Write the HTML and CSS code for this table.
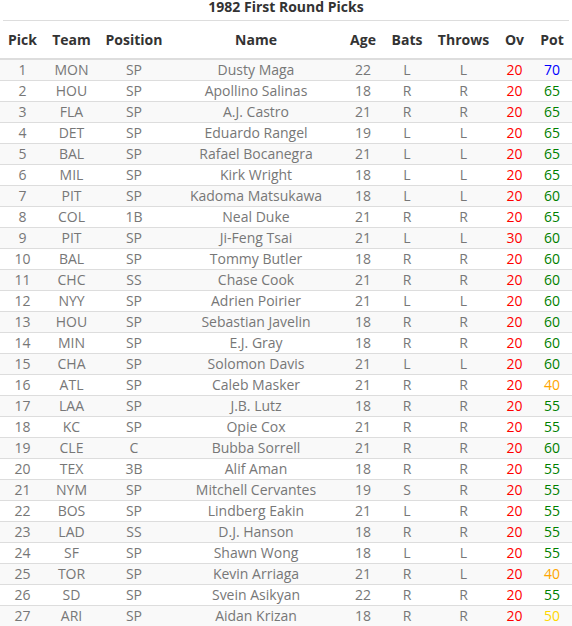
FILE: index.html
```html
<!DOCTYPE html>
<html>
<head>
<meta charset="utf-8">
<link rel="stylesheet" href="styles.css">
</head>
<body>
<div class="title">1982 First Round Picks</div>
<table class="picks">
<colgroup>
<col class="c-pick"><col class="c-team"><col class="c-pos"><col class="c-name"><col class="c-age"><col class="c-bats"><col class="c-throws"><col class="c-ov"><col class="c-pot">
</colgroup>
<thead>
<tr><th>Pick</th><th>Team</th><th>Position</th><th>Name</th><th>Age</th><th>Bats</th><th>Throws</th><th>Ov</th><th>Pot</th></tr>
</thead>
<tbody>
<tr><td>1</td><td>MON</td><td>SP</td><td>Dusty Maga</td><td>22</td><td>L</td><td>L</td><td class="red">20</td><td class="blue">70</td></tr>
<tr><td>2</td><td>HOU</td><td>SP</td><td>Apollino Salinas</td><td>18</td><td>R</td><td>R</td><td class="red">20</td><td class="green">65</td></tr>
<tr><td>3</td><td>FLA</td><td>SP</td><td>A.J. Castro</td><td>21</td><td>R</td><td>R</td><td class="red">20</td><td class="green">65</td></tr>
<tr><td>4</td><td>DET</td><td>SP</td><td>Eduardo Rangel</td><td>19</td><td>L</td><td>L</td><td class="red">20</td><td class="green">65</td></tr>
<tr><td>5</td><td>BAL</td><td>SP</td><td>Rafael Bocanegra</td><td>21</td><td>L</td><td>L</td><td class="red">20</td><td class="green">65</td></tr>
<tr><td>6</td><td>MIL</td><td>SP</td><td>Kirk Wright</td><td>18</td><td>L</td><td>L</td><td class="red">20</td><td class="green">65</td></tr>
<tr><td>7</td><td>PIT</td><td>SP</td><td>Kadoma Matsukawa</td><td>18</td><td>L</td><td>L</td><td class="red">20</td><td class="green">60</td></tr>
<tr><td>8</td><td>COL</td><td>1B</td><td>Neal Duke</td><td>21</td><td>R</td><td>R</td><td class="red">20</td><td class="green">65</td></tr>
<tr><td>9</td><td>PIT</td><td>SP</td><td>Ji-Feng Tsai</td><td>21</td><td>L</td><td>L</td><td class="red">30</td><td class="green">60</td></tr>
<tr><td>10</td><td>BAL</td><td>SP</td><td>Tommy Butler</td><td>18</td><td>R</td><td>R</td><td class="red">20</td><td class="green">60</td></tr>
<tr><td>11</td><td>CHC</td><td>SS</td><td>Chase Cook</td><td>21</td><td>R</td><td>R</td><td class="red">20</td><td class="green">60</td></tr>
<tr><td>12</td><td>NYY</td><td>SP</td><td>Adrien Poirier</td><td>21</td><td>L</td><td>L</td><td class="red">20</td><td class="green">60</td></tr>
<tr><td>13</td><td>HOU</td><td>SP</td><td>Sebastian Javelin</td><td>18</td><td>R</td><td>R</td><td class="red">20</td><td class="green">60</td></tr>
<tr><td>14</td><td>MIN</td><td>SP</td><td>E.J. Gray</td><td>18</td><td>R</td><td>R</td><td class="red">20</td><td class="green">60</td></tr>
<tr><td>15</td><td>CHA</td><td>SP</td><td>Solomon Davis</td><td>21</td><td>L</td><td>L</td><td class="red">20</td><td class="green">60</td></tr>
<tr><td>16</td><td>ATL</td><td>SP</td><td>Caleb Masker</td><td>21</td><td>R</td><td>R</td><td class="red">20</td><td class="orange">40</td></tr>
<tr><td>17</td><td>LAA</td><td>SP</td><td>J.B. Lutz</td><td>18</td><td>R</td><td>R</td><td class="red">20</td><td class="green">55</td></tr>
<tr><td>18</td><td>KC</td><td>SP</td><td>Opie Cox</td><td>21</td><td>R</td><td>R</td><td class="red">20</td><td class="green">55</td></tr>
<tr><td>19</td><td>CLE</td><td>C</td><td>Bubba Sorrell</td><td>21</td><td>R</td><td>R</td><td class="red">20</td><td class="green">60</td></tr>
<tr><td>20</td><td>TEX</td><td>3B</td><td>Alif Aman</td><td>18</td><td>R</td><td>R</td><td class="red">20</td><td class="green">55</td></tr>
<tr><td>21</td><td>NYM</td><td>SP</td><td>Mitchell Cervantes</td><td>19</td><td>S</td><td>R</td><td class="red">20</td><td class="green">55</td></tr>
<tr><td>22</td><td>BOS</td><td>SP</td><td>Lindberg Eakin</td><td>21</td><td>L</td><td>R</td><td class="red">20</td><td class="green">55</td></tr>
<tr><td>23</td><td>LAD</td><td>SS</td><td>D.J. Hanson</td><td>18</td><td>R</td><td>R</td><td class="red">20</td><td class="green">55</td></tr>
<tr><td>24</td><td>SF</td><td>SP</td><td>Shawn Wong</td><td>18</td><td>L</td><td>L</td><td class="red">20</td><td class="green">55</td></tr>
<tr><td>25</td><td>TOR</td><td>SP</td><td>Kevin Arriaga</td><td>21</td><td>R</td><td>L</td><td class="red">20</td><td class="orange">40</td></tr>
<tr><td>26</td><td>SD</td><td>SP</td><td>Svein Asikyan</td><td>22</td><td>R</td><td>R</td><td class="red">20</td><td class="green">55</td></tr>
<tr><td>27</td><td>ARI</td><td>SP</td><td>Aidan Krizan</td><td>18</td><td>R</td><td>R</td><td class="red">20</td><td class="yellow">50</td></tr>
</tbody>
</table>
</body>
</html>
```
FILE: styles.css
```css
html, body {
  margin: 0;
  padding: 0;
  background: #fff;
  font-family: "Open Sans", "Liberation Sans", sans-serif;
}
.title {
  margin: 0 3px;
  height: 20px;
  line-height: 14px;
  font-size: 14px;
  font-weight: 700;
  color: #333;
  text-align: center;
  border-bottom: 1px solid #ddd;
}
.picks {
  width: 572px;
  border-collapse: collapse;
  table-layout: fixed;
  font-size: 14px;
}
.c-pick { width: 45px; }
.c-team { width: 53px; }
.c-pos { width: 72px; }
.c-name { width: 172px; }
.c-age { width: 42px; }
.c-bats { width: 46px; }
.c-throws { width: 67px; }
.c-ov { width: 35px; }
.c-pot { width: 40px; }
.picks th {
  padding: 8px 0 8px;
  height: 21px;
  line-height: 21px;
  font-weight: 700;
  color: #333;
  text-align: center;
  border-bottom: 2px solid #ddd;
}
.picks td {
  padding: 0;
  height: 20px;
  line-height: 20px;
  color: #777;
  text-align: center;
  border-bottom: 1px solid #ddd;
  white-space: nowrap;
}
.picks tbody tr:nth-child(odd) td { background: #f9f9f9; }
.picks td.red { color: #ff0000; }
.picks td.green { color: #008000; }
.picks td.blue { color: #0000ff; }
.picks td.orange { color: #ffa500; }
.picks td.yellow { color: #ffd700; }
```
